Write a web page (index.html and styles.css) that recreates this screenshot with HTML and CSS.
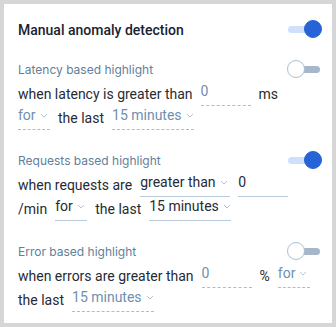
FILE: index.html
```html
<!DOCTYPE html>
<html lang="en">
<head>
    <meta charset="UTF-8">
    <title>Anomaly detection settings</title>
    <link rel="stylesheet" href="styles.css">
</head>
<body>

    <div class="panel">
        <!-- Master switch -->
        <div class="head-row">
            <h1>Manual anomaly detection</h1>
            <span class="toggle on"><span class="knob"></span></span>
        </div>

        <!-- Latency -->
        <div class="section">
            <div class="label-row">
                <span class="label">Latency based highlight</span>
                <span class="toggle"><span class="knob"></span></span>
            </div>
            <div class="cond">
                <span>when latency is greater than</span>
                <span class="field num">0</span>
                <span>ms</span>
            </div>
            <div class="cond">
                <span class="field pick sm">for <svg class="chev" viewBox="0 0 8 5"><polyline points="1,1 4,4 7,1"/></svg></span>
                <span>the last</span>
                <span class="field pick">15 minutes <svg class="chev" viewBox="0 0 8 5"><polyline points="1,1 4,4 7,1"/></svg></span>
            </div>
        </div>

        <!-- Requests -->
        <div class="section active">
            <div class="label-row">
                <span class="label">Requests based highlight</span>
                <span class="toggle on"><span class="knob"></span></span>
            </div>
            <div class="cond">
                <span>when requests are</span>
                <span class="field pick wide">greater than <svg class="chev" viewBox="0 0 8 5"><polyline points="1,1 4,4 7,1"/></svg></span>
                <span class="field num">0</span>
            </div>
            <div class="cond">
                <span>/min</span>
                <span class="field pick sm">for <svg class="chev" viewBox="0 0 8 5"><polyline points="1,1 4,4 7,1"/></svg></span>
                <span>the last</span>
                <span class="field pick">15 minutes <svg class="chev" viewBox="0 0 8 5"><polyline points="1,1 4,4 7,1"/></svg></span>
            </div>
        </div>

        <!-- Errors -->
        <div class="section">
            <div class="label-row">
                <span class="label">Error based highlight</span>
                <span class="toggle"><span class="knob"></span></span>
            </div>
            <div class="cond">
                <span>when errors are greater than</span>
                <span class="field num">0</span>
                <span>%</span>
                <span class="field pick sm">for <svg class="chev" viewBox="0 0 8 5"><polyline points="1,1 4,4 7,1"/></svg></span>
            </div>
            <div class="cond">
                <span>the last</span>
                <span class="field pick">15 minutes <svg class="chev" viewBox="0 0 8 5"><polyline points="1,1 4,4 7,1"/></svg></span>
            </div>
        </div>
    </div>

</body>
</html>
```

FILE: styles.css
```css
body {
    margin: 0;
    padding: 4px;
    background-color: #d6d6d6;
    font-family: Roboto, "Noto Sans", sans-serif;
    color: #262b36;
}

.panel {
    background-color: #fff;
    width: 304px;
    height: 291px;
    padding: 16px 10px 12px 14px;
}

.head-row,
.label-row {
    display: flex;
    justify-content: space-between;
    align-items: center;
    height: 19px;
}

.label-row {
    margin-bottom: 3px;
}

h1 {
    margin: 0;
    font-size: 14px;
    font-weight: 500;
    color: #1b2130;
}

.section {
    margin-top: 21px;
}

.label {
    font-family: Inter, "Noto Sans", sans-serif;
    font-size: 12px;
    color: #5f7f9c;
}

/* Switches */
.toggle {
    width: 35px;
    height: 19px;
    position: relative;
    display: flex;
    align-items: center;
}

.toggle::before {
    content: "";
    display: block;
    margin-left: 14px;
    width: 19px;
    height: 7px;
    border-radius: 4px;
    background-color: #a5b7c8;
}

.toggle .knob {
    position: absolute;
    left: 0;
    top: 0;
    width: 16px;
    height: 16px;
    border-radius: 50%;
    background: #fff;
    border: 1.5px solid #a9bfd3;
}

.toggle.on::before {
    margin-left: 1px;
    width: 22px;
    background-color: #cfe0fb;
}

.toggle.on .knob {
    left: auto;
    right: 0;
    background: #2563d6;
    border-color: #2563d6;
}

/* Condition rows */
.cond {
    display: flex;
    align-items: center;
    gap: 8px;
    height: 24px;
    font-size: 14px;
    white-space: nowrap;
}

.field {
    display: flex;
    align-items: center;
    flex-shrink: 0;
    height: 18px;
    padding-bottom: 5px;
    border-bottom: 1px dashed #a9bdd0;
    color: #6f8fb0;
}

.num {
    width: 50px;
}

.pick {
    width: 82px;
    gap: 4px;
}

.pick.sm {
    width: 32px;
}

.pick.wide {
    width: 90px;
}

.chev {
    width: 8px;
    height: 5px;
    fill: none;
    stroke: #b4c5d6;
    stroke-width: 1;
}

.section.active .field {
    color: #262b36;
    border-bottom-style: solid;
    border-bottom-color: #b8cadc;
}
```
